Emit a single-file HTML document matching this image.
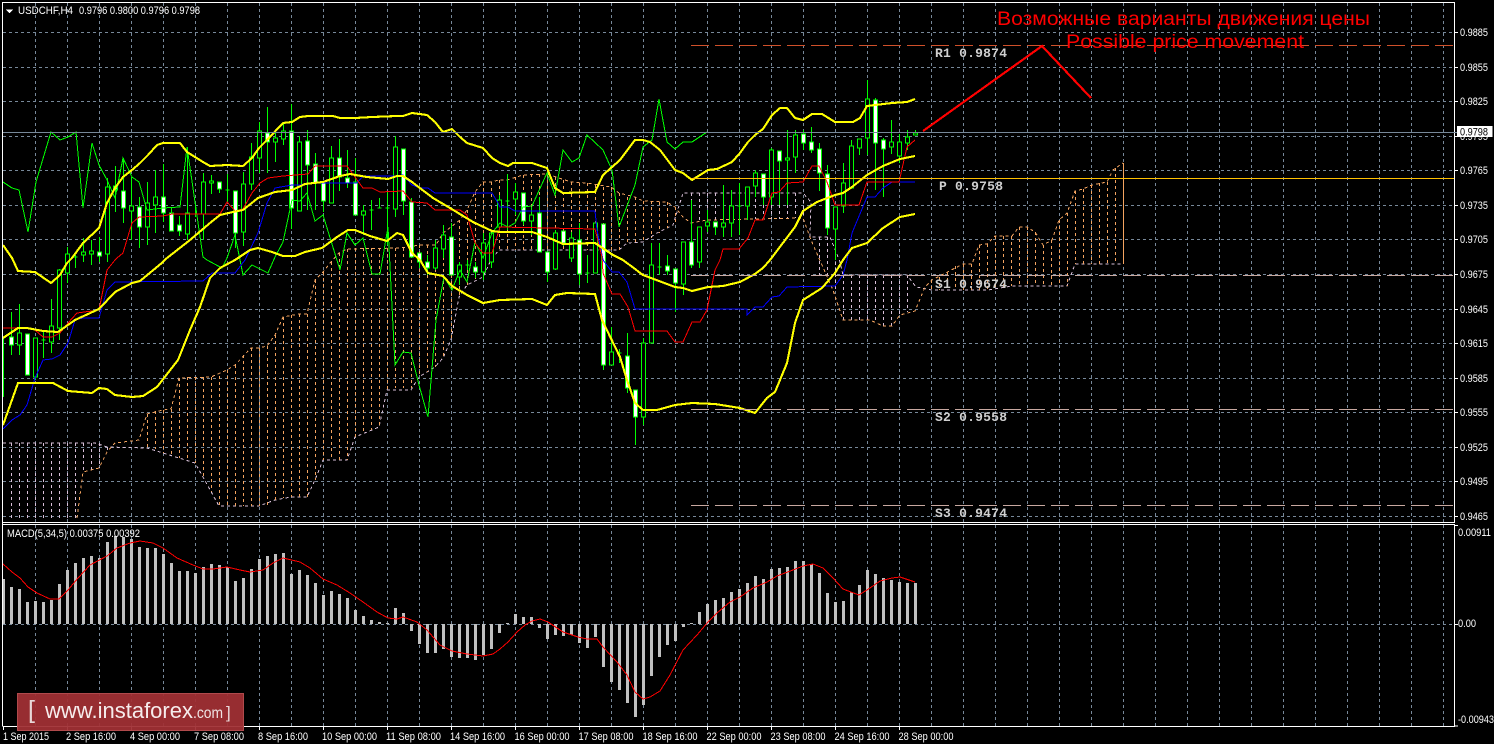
<!DOCTYPE html>
<html><head><meta charset="utf-8"><title>USDCHF,H4</title>
<style>
html,body{margin:0;padding:0;background:#000;width:1494px;height:744px;overflow:hidden}
svg{display:block;position:absolute;left:0;top:0}
text{font-family:"Liberation Sans",sans-serif;font-size:11px;fill:#fff}
.lv{font-family:"Liberation Mono",monospace;font-weight:bold;font-size:13px;fill:#cfcfcf}
.rt{font-size:19px;fill:#f00}
path,polyline,line,rect{shape-rendering:crispEdges}
.y{fill:none;stroke:#ff0;stroke-width:2.1}
.t{fill:none;stroke-width:1}
</style></head><body>
<svg width="1494" height="744" viewBox="0 0 1494 744" xmlns="http://www.w3.org/2000/svg">
<rect width="1494" height="744" fill="#000"/>
<!-- grid -->
<path fill="none" stroke="#778899" stroke-dasharray="3 3" d="M3 32.5H1454M3 67.5H1454M3 101.5H1454M3 136.5H1454M3 170.5H1454M3 205.5H1454M3 239.5H1454M3 274.5H1454M3 309.5H1454M3 343.5H1454M3 378.5H1454M3 412.5H1454M3 447.5H1454M3 481.5H1454M3 516.5H1454M3 624.5H1454
M35.5 3V522M67.5 3V522M99.5 3V522M131.5 3V522M163.5 3V522M195.5 3V522M227.5 3V522M259.5 3V522M291.5 3V522M323.5 3V522M355.5 3V522M387.5 3V522M419.5 3V522M451.5 3V522M483.5 3V522M515.5 3V522M547.5 3V522M579.5 3V522M611.5 3V522M643.5 3V522M675.5 3V522M707.5 3V522M739.5 3V522M771.5 3V522M803.5 3V522M835.5 3V522M867.5 3V522M899.5 3V522M931.5 3V522M963.5 3V522M995.5 3V522M1027.5 3V522M1059.5 3V522M1091.5 3V522M1123.5 3V522M1155.5 3V522M1187.5 3V522M1219.5 3V522M1251.5 3V522M1283.5 3V522M1315.5 3V522M1347.5 3V522M1379.5 3V522M1411.5 3V522M1443.5 3V522
M35.5 525V726M67.5 525V726M99.5 525V726M131.5 525V726M163.5 525V726M195.5 525V726M227.5 525V726M259.5 525V726M291.5 525V726M323.5 525V726M355.5 525V726M387.5 525V726M419.5 525V726M451.5 525V726M483.5 525V726M515.5 525V726M547.5 525V726M579.5 525V726M611.5 525V726M643.5 525V726M675.5 525V726M707.5 525V726M739.5 525V726M771.5 525V726M803.5 525V726M835.5 525V726M867.5 525V726M899.5 525V726M931.5 525V726M963.5 525V726M995.5 525V726M1027.5 525V726M1059.5 525V726M1091.5 525V726M1123.5 525V726M1155.5 525V726M1187.5 525V726M1219.5 525V726M1251.5 525V726M1283.5 525V726M1315.5 525V726M1347.5 525V726M1379.5 525V726M1411.5 525V726M1443.5 525V726"/>
<!-- kumo thistle hatch -->
<path fill="none" stroke="#d8bfd8" stroke-dasharray="3 3" d="M11.5 443V520M19.5 443V520M27.5 443V520M35.5 443V520M43.5 443V520M51.5 443V520M59.5 443V520M67.5 443V520M75.5 443V518M83.5 443V472M91.5 443V470M99.5 443V468M107.5 447V452
M691.5 193V223M699.5 193V221M707.5 193V220M715.5 193V220M723.5 193V220M731.5 193V220M739.5 193V220M747.5 193V219M755.5 193V219M763.5 193V219M771.5 193V219M779.5 193V219M787.5 193V218M795.5 193V218M803.5 200V218M819.5 237V275M827.5 237V280M835.5 250V292M843.5 275V320M851.5 275V320M859.5 275V320M867.5 275V320M875.5 275V322M883.5 275V326M891.5 275V326M899.5 275V315M907.5 275V312"/>
<path fill="none" stroke="#d8bfd8" stroke-dasharray="3 3" d="M3 443H95L107 447L147 448L163 453L195 463L203 477L219 506H259L275 500L291 497H307L315 480L323 460H347L355 437L379 427L387 390H411L419 377L435 367L443 358L451 340L459 297L467 285L483 277L491 260L499 250H619L627 243L643 242L657 233L673 225L683 193H803L811 202L810 237H830L840 262L843 275H907L916 287L932 290H988L1012 286H1067L1075 264H1123"/>
<!-- kumo sandy hatch -->
<path fill="none" stroke="#f4a460" stroke-dasharray="3 3" d="M147.5 414V448M155.5 411V449M163.5 410V453M171.5 409V455M179.5 378V458M187.5 377V460M195.5 377V463M203.5 377V477M211.5 377V492M219.5 376V506M227.5 370V506M235.5 365V506M243.5 355V506M251.5 348V506M259.5 348V506M267.5 346V505M275.5 335V500M283.5 317V498M291.5 315V497M299.5 314V497M307.5 314V497M315.5 280V480M323.5 272V460M331.5 262V460M339.5 253V460M347.5 249V460M355.5 248V437M363.5 248V432M371.5 248V430M379.5 248V427M387.5 248V390M395.5 248V388M403.5 248V388M411.5 248V388M419.5 245V377M427.5 245V372M435.5 245V367M443.5 233V358M451.5 227V340M459.5 220V297M467.5 210V285M475.5 192V280M483.5 182V277M491.5 182V260M499.5 180V250M507.5 180V250M515.5 177V250M523.5 175V250M531.5 174V250M539.5 174V250M547.5 174V250M555.5 177V250M563.5 180V250M571.5 182V250M579.5 183V250M587.5 183V250M595.5 185V250M603.5 187V250M611.5 187V250M619.5 193V250M627.5 197V243M635.5 197V243M643.5 201V242M651.5 201V238M659.5 202V233M667.5 202V228M675.5 207V224
M931.5 280V290M939.5 277V290M947.5 272V290M955.5 266V290M963.5 264V290M971.5 264V290M979.5 245V290M987.5 244V290M995.5 236V288M1003.5 236V287M1011.5 236V286M1019.5 227V286M1027.5 227V286M1035.5 232V286M1043.5 245V286M1051.5 240V286M1059.5 220V286M1067.5 213V286M1075.5 191V264M1083.5 189V264M1091.5 185V264M1099.5 183V264M1107.5 182V264M1115.5 168V264"/>
<path fill="none" stroke="#f4a460" d="M1123.5 163V264"/>
<path fill="none" stroke="#f4a460" stroke-dasharray="3 3" d="M77 518L83 472L99 468L107 452L115 443L139 440L147 414L163 410L171 409L179 378L211 377L227 370L235 365L251 348H259L267 346L275 335L283 317L299 314H307L315 280L323 272L331 262L339 253L347 249L400 248L420 245H436L443 233L451 227L460 220L467 210L475 192L483 182H491L499 180H507L523 175L547 174L571 182L587 183L611 187L619 193L635 197L643 201L667 202L675 207L683 217L691 223L707 220L755 219L803 218L811 240L833 290L843 320H870L883 326H892L900 315L915 311L925 287L932 280L963 264H972L979 245L987 244L995 236H1012L1019 227H1027L1035 232L1043 245L1052 240L1059 220L1067 213L1075 191L1083 189L1092 185L1107 182L1113 170L1123 163"/>
<!-- wicks -->
<path fill="none" stroke="#0f0" d="M3.5 337V397M11.5 312V355M19.5 304V355M27.5 334V375M35.5 338V380M43.5 330V358M51.5 299V353M59.5 269V340M67.5 247V283M75.5 255V268M83.5 238V262M91.5 240V265M99.5 237V262M107.5 178V262M115.5 166V212M123.5 158V223M131.5 177V240M139.5 197V248M147.5 182V245M155.5 170V233M163.5 164V222M171.5 207V231M179.5 216V236M187.5 147V240M195.5 204V217M203.5 173V240M211.5 175V194M219.5 182V193M227.5 174V202M235.5 191V248M243.5 172V246M251.5 143V190M259.5 122V173M267.5 107V173M275.5 130V162M283.5 122V145M291.5 104V229M299.5 136V211M307.5 130V210M315.5 153V210M323.5 183V212M331.5 146V203M339.5 139V191M347.5 150V188M355.5 158V215M363.5 205V235M371.5 200V230M379.5 198V208M387.5 192V245M395.5 136V217M403.5 149V215M411.5 198V258M419.5 253V268M427.5 255V275M435.5 240V270M443.5 225V258M451.5 223V275M459.5 262V285M467.5 260V270M475.5 262V278M483.5 233V280M491.5 233V268M499.5 195V232M507.5 174V230M515.5 183V215M523.5 193V225M531.5 207V235M539.5 197V252M547.5 252V282M555.5 230V270M563.5 231V246M571.5 232V262M579.5 223V285M587.5 255V283M595.5 223V273M603.5 224V370M611.5 327V365M619.5 349V363M627.5 333V393M635.5 390V445M643.5 338V425M651.5 243V343M659.5 243V275M667.5 255V275M675.5 269V312M683.5 242V295M691.5 200V268M699.5 227V268M707.5 210V232M715.5 222V235M723.5 185V237M731.5 190V237M739.5 183V235M747.5 187V220M755.5 170V197M763.5 174V205M771.5 148V205M779.5 151V205M787.5 130V205M795.5 130V173M803.5 130V150M811.5 127V153M819.5 143V191M827.5 165V235M835.5 207V260M843.5 163V213M851.5 140V188M859.5 139V155M867.5 80V155M875.5 98V190M883.5 138V197M891.5 120V154M899.5 134V163M907.5 130V150M915.5 130V135"/>
<!-- bodies -->
<path fill="#fff" stroke="#0f0" d="M9.5 337h4V345h-4zM25.5 334h4V375h-4zM97.5 252h4V256h-4zM113.5 186h4V190h-4zM121.5 191h4V208h-4zM137.5 207h4V227h-4zM161.5 197h4V213h-4zM169.5 213h4V231h-4zM177.5 225h4V231h-4zM217.5 182h4V189h-4zM233.5 191h4V233h-4zM265.5 133h4V142h-4zM289.5 131h4V208h-4zM305.5 141h4V165h-4zM313.5 164h4V183h-4zM321.5 183h4V201h-4zM337.5 158h4V177h-4zM345.5 178h4V183h-4zM353.5 182h4V215h-4zM401.5 149h4V201h-4zM409.5 202h4V257h-4zM417.5 253h4V262h-4zM425.5 262h4V268h-4zM449.5 237h4V275h-4zM473.5 267h4V272h-4zM521.5 193h4V221h-4zM537.5 213h4V252h-4zM545.5 252h4V272h-4zM561.5 231h4V243h-4zM577.5 240h4V274h-4zM601.5 224h4V365h-4zM625.5 356h4V388h-4zM633.5 390h4V417h-4zM665.5 266h4V271h-4zM673.5 269h4V283h-4zM689.5 242h4V265h-4zM713.5 222h4V227h-4zM761.5 174h4V197h-4zM777.5 151h4V161h-4zM801.5 134h4V143h-4zM809.5 142h4V150h-4zM817.5 149h4V173h-4zM825.5 174h4V228h-4zM873.5 100h4V143h-4zM881.5 140h4V149h-4z"/>
<path fill="#000" stroke="#0f0" d="M17.5 333h4V345h-4zM33.5 338h4V377h-4zM49.5 326h4V342h-4zM57.5 270h4V328h-4zM65.5 254h4V273h-4zM81.5 252h4V255h-4zM89.5 251h4V254h-4zM105.5 187h4V254h-4zM129.5 206h4V211h-4zM145.5 203h4V227h-4zM153.5 197h4V205h-4zM185.5 213h4V234h-4zM201.5 182h4V214h-4zM209.5 181h4V183h-4zM241.5 184h4V232h-4zM249.5 157h4V184h-4zM257.5 131h4V158h-4zM273.5 138h4V142h-4zM281.5 131h4V139h-4zM297.5 142h4V211h-4zM329.5 158h4V203h-4zM361.5 211h4V215h-4zM393.5 147h4V209h-4zM433.5 248h4V268h-4zM441.5 235h4V249h-4zM457.5 265h4V277h-4zM481.5 243h4V272h-4zM489.5 233h4V262h-4zM497.5 200h4V227h-4zM513.5 192h4V199h-4zM529.5 215h4V221h-4zM553.5 233h4V269h-4zM569.5 238h4V258h-4zM593.5 223h4V273h-4zM609.5 352h4V365h-4zM641.5 343h4V417h-4zM649.5 265h4V343h-4zM681.5 242h4V284h-4zM697.5 227h4V262h-4zM705.5 222h4V226h-4zM721.5 223h4V227h-4zM729.5 206h4V223h-4zM745.5 187h4V206h-4zM753.5 173h4V186h-4zM769.5 150h4V197h-4zM785.5 158h4V160h-4zM793.5 135h4V157h-4zM833.5 207h4V229h-4zM841.5 183h4V206h-4zM849.5 146h4V188h-4zM857.5 139h4V148h-4zM865.5 99h4V138h-4zM889.5 142h4V147h-4zM897.5 142h4V156h-4zM905.5 137h4V143h-4zM913.5 133h4V135h-4z"/>
<path fill="none" stroke="#0f0" d="M41.5 340h4M73.5 257h4M193.5 214h4M225.5 190h4M369.5 210h4M377.5 208h4M385.5 208h4M465.5 265h4M505.5 201h4M585.5 273h4M617.5 353h4M657.5 267h4M737.5 206h4"/>
<!-- chikou -->
<polyline class="t" stroke="#0f0" points="3,182 12,188 19,190 28,232 36,182 51,132 60,140 68,137 76,132 83,208 92,143 99,165 107,180 115,198 123,158 132,177 139,182 147,210 163,208 180,207 187,147 203,257 207,260 222,268 227,258 235,235 243,275 252,265 268,273 275,257 283,242 292,200 300,201 307,193 315,221 323,215 340,270 347,233 355,245 363,238 372,274 380,274 388,227 395,365 403,352 411,353 419,385 428,417 436,320 444,277 452,290 460,270 467,282 475,242 483,258 492,233 500,223 508,227 515,223 523,207 532,206 547,173 555,195 563,150 572,162 579,158 587,135 603,150 612,170 619,227 635,185 643,147 652,140 659,99 667,142 675,149 683,142 692,142 707,132"/>
<!-- Kijun -->
<polyline class="t" stroke="#00f" points="3,429 12,420 20,415 27,405 35,378 43,360 52,359 60,355 68,343 75,320 83,318 99,318 107,290 115,282 203,281 212,273 235,273 245,260 258,233 267,203 275,188 292,185 300,185 307,183 357,183 363,176 395,176 403,175 412,185 420,188 428,188 435,193 492,193 498,203 500,207 508,207 515,211 595,211 597,230 603,260 612,272 619,272 627,282 635,309 747,309 747,315 755,307 763,307 772,297 779,296 787,287 835,286 843,275 847,260 852,233 867,197 875,197 883,188 892,182 915,182"/>
<!-- Tenkan -->
<polyline class="t" stroke="#f00" points="3,328 27,328 35,330 43,337 52,337 60,333 68,323 77,313 99,310 107,270 115,260 117,258 123,253 132,223 139,217 163,216 172,214 220,214 227,202 235,211 243,209 252,193 260,183 268,178 283,176 308,174 315,166 347,166 363,188 372,188 380,192 403,191 412,202 427,203 435,210 460,210 467,215 475,243 483,253 492,253 500,227 595,229 602,257 603,273 612,294 620,294 628,307 635,331 667,331 675,342 683,342 692,322 700,322 707,310 715,270 720,260 723,249 739,249 748,238 755,220 763,220 772,193 779,192 787,183 803,182 812,166 819,166 827,182 835,205 859,205 867,182 899,182 907,147 915,140"/>
<!-- Bollinger -->
<polyline class="y" points="3,245 12,258 18,271 35,272 51,283 60,275 67,263 72,258 83,243 99,228 107,203 115,188 123,177 132,170 140,163 148,155 157,145 163,143 180,143 187,152 203,162 210,166 227,165 243,166 252,158 259,148 267,140 283,123 292,122 300,117 308,116 333,116 340,118 355,118 372,117 397,116 403,116 412,113 427,115 435,122 443,132 452,129 460,137 467,143 483,148 492,158 500,163 508,166 513,163 532,163 547,168 555,188 563,193 595,192 603,175 620,160 635,140 643,140 650,142 660,150 675,170 683,173 692,180 708,170 717,169 732,162 740,153 748,142 755,135 763,129 772,115 780,108 787,108 795,118 803,120 812,114 822,114 835,122 853,122 860,118 867,106 875,105 892,103 907,102 915,99"/>
<polyline class="y" points="3,338 18,328 27,328 43,331 58,332 75,320 99,309 115,292 132,283 140,281 163,262 167,258 190,240 210,223 220,215 233,212 243,210 258,198 275,192 292,190 305,184 323,182 340,176 350,174 367,177 388,179 397,176 403,176 412,182 433,198 450,208 473,222 492,231 500,232 532,232 547,237 563,244 595,243 613,255 623,260 643,275 675,287 683,288 692,291 708,287 723,286 740,282 755,274 763,268 770,260 795,227 803,211 817,202 835,195 843,193 852,187 867,175 883,166 900,159 915,156"/>
<polyline class="y" points="3,425 18,383 43,383 53,383 68,391 92,393 99,388 107,389 115,395 132,397 143,396 157,387 178,360 190,330 200,307 210,278 220,268 235,260 250,250 258,248 272,252 283,256 295,256 305,252 322,248 337,237 348,230 355,230 370,236 387,241 397,233 403,235 412,253 420,260 423,265 428,273 443,276 452,286 467,295 483,303 500,300 532,299 547,305 555,295 567,293 595,294 602,320 620,357 627,380 635,403 643,410 657,410 675,405 692,403 715,404 740,408 755,413 767,398 775,392 787,363 795,323 803,300 822,288 835,273 843,260 852,248 867,243 883,228 900,217 915,214"/>
<!-- price lines -->
<path fill="none" stroke="#778899" d="M3 132.5H1454"/>
<path fill="none" stroke="#ffc000" d="M691 178.5H1454"/>
<path fill="none" stroke="#d0502a" stroke-dasharray="18 6" d="M691 45.5H1454"/>
<path fill="none" stroke="#c8a8a0" stroke-dasharray="18 6" d="M691 275.5H1454M691 409.5H1454M691 505.5H1454"/>
<!-- arrow -->
<polyline points="923,131 1042,46 1091,98" fill="none" stroke="#f00" stroke-width="2.2"/>
<!-- MACD bars -->
<path fill="none" stroke="#c0c0c0" stroke-width="3" d="M3.5 624V579M11.5 624V587M19.5 624V589M27.5 624V602M35.5 624V601M43.5 624V602M51.5 624V600M59.5 624V584M67.5 624V570M75.5 624V563M83.5 624V558M91.5 624V556M99.5 624V558M107.5 624V542M115.5 624V536M123.5 624V537M131.5 624V539M139.5 624V547M147.5 624V548M155.5 624V548M163.5 624V554M171.5 624V563M179.5 624V571M187.5 624V571M195.5 624V573M203.5 624V567M211.5 624V564M219.5 624V565M227.5 624V567M235.5 624V581M243.5 624V578M251.5 624V569M259.5 624V559M267.5 624V556M275.5 624V554M283.5 624V553M291.5 624V574M299.5 624V570M307.5 624V575M315.5 624V583M323.5 624V595M331.5 624V591M339.5 624V594M347.5 624V598M355.5 624V610M363.5 624V616M371.5 624V620M379.5 624V622M387.5 624V623M395.5 624V608M403.5 624V613M411.5 624V631M419.5 624V644M427.5 624V653M435.5 624V653M443.5 624V649M451.5 624V657M459.5 624V658M467.5 624V658M475.5 624V660M483.5 624V655M491.5 624V649M499.5 624V633M507.5 624V623M515.5 624V614M523.5 624V617M531.5 624V617M539.5 624V628M547.5 624V639M555.5 624V635M563.5 624V636M571.5 624V635M579.5 624V643M587.5 624V648M595.5 624V637M603.5 624V667M611.5 624V682M619.5 624V690M627.5 624V703M635.5 624V717M643.5 624V705M651.5 624V676M659.5 624V657M667.5 624V645M675.5 624V641M683.5 624V627M691.5 624V623M699.5 624V612M707.5 624V604M715.5 624V600M723.5 624V598M731.5 624V592M739.5 624V589M747.5 624V583M755.5 624V576M763.5 624V579M771.5 624V569M779.5 624V568M787.5 624V567M795.5 624V561M803.5 624V561M811.5 624V564M819.5 624V573M827.5 624V593M835.5 624V602M843.5 624V601M851.5 624V592M859.5 624V585M867.5 624V570M875.5 624V574M883.5 624V578M891.5 624V580M899.5 624V582M907.5 624V583M915.5 624V583"/>
<polyline class="t" stroke="#f00" points="3,564 12,572 20,578 28,587 37,593 50,599 59,599 68,590 78,578 90,565 107,556 117,548 130,543 140,541 153,543 163,548 177,558 193,565 203,569 213,569 227,567 240,570 250,572 263,570 273,563 283,558 300,562 310,568 323,579 337,585 350,593 363,602 377,612 388,618 397,619 403,617 417,622 427,630 440,645 452,651 467,654 483,656 493,654 500,649 508,642 517,632 525,625 532,621 540,619 548,622 563,632 578,637 587,639 597,639 603,647 617,662 627,675 635,692 643,699 650,697 660,691 670,675 683,650 697,635 708,622 717,613 730,602 740,597 753,588 767,582 777,576 793,570 803,566 813,564 823,568 833,578 843,589 859,595 870,588 880,581 892,578 900,577 915,582"/>
<!-- frame -->
<path fill="none" stroke="#fff" d="M2.5 726.5V2.5H1454.5V522.5H3M3 524.5H1454.5V726.5H3"/>
<!-- axis ticks -->
<path fill="none" stroke="#fff" d="M1455 32.5h3M1455 67.5h3M1455 101.5h3M1455 136.5h3M1455 170.5h3M1455 205.5h3M1455 239.5h3M1455 274.5h3M1455 309.5h3M1455 343.5h3M1455 378.5h3M1455 412.5h3M1455 447.5h3M1455 481.5h3M1455 516.5h3M1455 525.5h3M1455 624.5h3M1455 726h3
M3.5 727v3M67.5 727v3M131.5 727v3M195.5 727v3M259.5 727v3M323.5 727v3M387.5 727v3M451.5 727v3M515.5 727v3M579.5 727v3M643.5 727v3M707.5 727v3M771.5 727v3M835.5 727v3M899.5 727v3"/>
<!-- axis labels -->
<g>
<text x="1460" y="36" textLength="28" lengthAdjust="spacingAndGlyphs">0.9885</text>
<text x="1460" y="71" textLength="28" lengthAdjust="spacingAndGlyphs">0.9855</text>
<text x="1460" y="105" textLength="28" lengthAdjust="spacingAndGlyphs">0.9825</text>
<text x="1460" y="140" textLength="28" lengthAdjust="spacingAndGlyphs">0.9795</text>
<text x="1460" y="174" textLength="28" lengthAdjust="spacingAndGlyphs">0.9765</text>
<text x="1460" y="209" textLength="28" lengthAdjust="spacingAndGlyphs">0.9735</text>
<text x="1460" y="243" textLength="28" lengthAdjust="spacingAndGlyphs">0.9705</text>
<text x="1460" y="278" textLength="28" lengthAdjust="spacingAndGlyphs">0.9675</text>
<text x="1460" y="313" textLength="28" lengthAdjust="spacingAndGlyphs">0.9645</text>
<text x="1460" y="347" textLength="28" lengthAdjust="spacingAndGlyphs">0.9615</text>
<text x="1460" y="382" textLength="28" lengthAdjust="spacingAndGlyphs">0.9585</text>
<text x="1460" y="416" textLength="28" lengthAdjust="spacingAndGlyphs">0.9555</text>
<text x="1460" y="451" textLength="28" lengthAdjust="spacingAndGlyphs">0.9525</text>
<text x="1460" y="485" textLength="28" lengthAdjust="spacingAndGlyphs">0.9495</text>
<text x="1460" y="520" textLength="28" lengthAdjust="spacingAndGlyphs">0.9465</text>
<text x="1458" y="536" textLength="33" lengthAdjust="spacingAndGlyphs">0.00911</text>
<text x="1458" y="627" textLength="18" lengthAdjust="spacingAndGlyphs">0.00</text>
<text x="1458" y="723" textLength="36" lengthAdjust="spacingAndGlyphs">-0.00943</text>
</g>
<rect x="1457" y="126" width="35.5" height="11" fill="#fff"/>
<path fill="none" stroke="#778899" d="M1454 132.5h3"/>
<text x="1460" y="135.5" textLength="28" lengthAdjust="spacingAndGlyphs" style="fill:#000">0.9798</text>
<!-- titles -->
<path d="M6 9.5h7l-3.5 4z" fill="#fff"/>
<text x="18" y="14" textLength="55" lengthAdjust="spacingAndGlyphs">USDCHF,H4</text>
<text x="79" y="14" textLength="121" lengthAdjust="spacingAndGlyphs">0.9796 0.9800 0.9796 0.9798</text>
<text x="7" y="537" textLength="133" lengthAdjust="spacingAndGlyphs">MACD(5,34,5) 0.00375 0.00392</text>
<!-- level labels -->
<text class="lv" x="935" y="57" textLength="72">R1 0.9874</text>
<text class="lv" x="939" y="190" textLength="64">P 0.9758</text>
<text class="lv" x="935" y="288" textLength="72">S1 0.9674</text>
<text class="lv" x="935" y="421" textLength="72">S2 0.9558</text>
<text class="lv" x="935" y="517" textLength="72">S3 0.9474</text>
<!-- red text -->
<text class="rt" x="997" y="25" textLength="373" lengthAdjust="spacingAndGlyphs">Возможные варианты движения цены</text>
<text class="rt" x="1066" y="48" textLength="238" lengthAdjust="spacingAndGlyphs">Possible price movement</text>
<!-- time axis -->
<g>
<text x="3" y="740" textLength="46" lengthAdjust="spacingAndGlyphs">1 Sep 2015</text>
<text x="66" y="740" textLength="50" lengthAdjust="spacingAndGlyphs">2 Sep 16:00</text>
<text x="130" y="740" textLength="50" lengthAdjust="spacingAndGlyphs">4 Sep 00:00</text>
<text x="194" y="740" textLength="50" lengthAdjust="spacingAndGlyphs">7 Sep 08:00</text>
<text x="258" y="740" textLength="50" lengthAdjust="spacingAndGlyphs">8 Sep 16:00</text>
<text x="322" y="740" textLength="55" lengthAdjust="spacingAndGlyphs">10 Sep 00:00</text>
<text x="386" y="740" textLength="55" lengthAdjust="spacingAndGlyphs">11 Sep 08:00</text>
<text x="450" y="740" textLength="55" lengthAdjust="spacingAndGlyphs">14 Sep 16:00</text>
<text x="514.5" y="740" textLength="55" lengthAdjust="spacingAndGlyphs">16 Sep 00:00</text>
<text x="578.5" y="740" textLength="55" lengthAdjust="spacingAndGlyphs">17 Sep 08:00</text>
<text x="642.5" y="740" textLength="55" lengthAdjust="spacingAndGlyphs">18 Sep 16:00</text>
<text x="706.5" y="740" textLength="55" lengthAdjust="spacingAndGlyphs">22 Sep 00:00</text>
<text x="770.5" y="740" textLength="55" lengthAdjust="spacingAndGlyphs">23 Sep 08:00</text>
<text x="834.5" y="740" textLength="55" lengthAdjust="spacingAndGlyphs">24 Sep 16:00</text>
<text x="898.5" y="740" textLength="55" lengthAdjust="spacingAndGlyphs">28 Sep 00:00</text>
</g>
<!-- logo -->
<rect x="17.5" y="693.5" width="226" height="37" fill="#a03034" fill-opacity="0.94" stroke="#b04a4c"/>
<text x="28" y="718" style="font-size:25px;fill:#e8d8d8">[</text>
<text x="45" y="718" textLength="148" lengthAdjust="spacingAndGlyphs" style="font-size:22px;fill:#f6ecec">www.instaforex</text>
<text x="193" y="718" textLength="30" lengthAdjust="spacingAndGlyphs" style="font-size:16px;fill:#f0e4e4">.com</text>
<text x="226" y="718" style="font-size:17px;fill:#e8d8d8">]</text>
</svg>
</body></html>
